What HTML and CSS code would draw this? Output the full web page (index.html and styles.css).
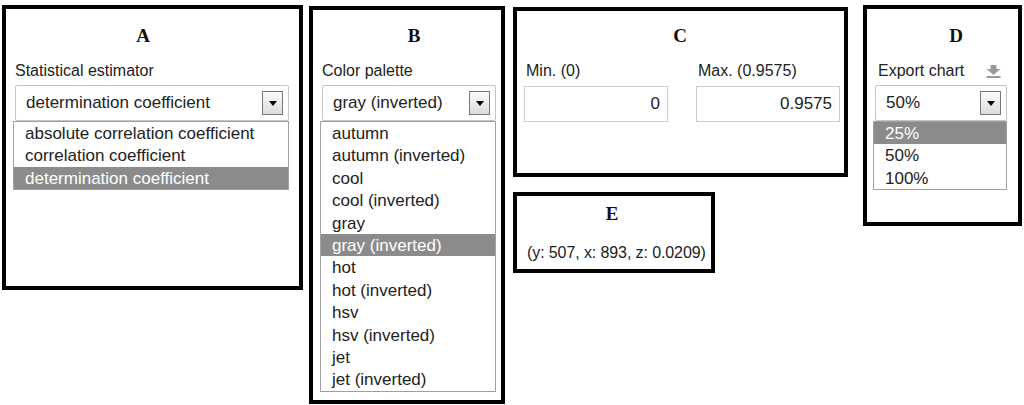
FILE: index.html
```html
<!DOCTYPE html>
<html lang="en">
<head>
    <meta charset="UTF-8">
    <meta name="viewport" content="width=device-width, initial-scale=1.0">
    <title>Chart Controls</title>
    <link rel="stylesheet" href="styles.css">
</head>
<body>
    <div class="panels">
        <div class="panel panel-a">
            <div class="title">A</div>
            <div class="field">
                <div class="field-label">Statistical estimator</div>
                <div class="select"><span>determination coefficient</span><span class="select-btn"></span></div>
                <ul class="options">
                    <li>absolute correlation coefficient</li>
                    <li>correlation coefficient</li>
                    <li class="selected">determination coefficient</li>
                </ul>
            </div>
        </div>

        <div class="panel panel-b">
            <div class="title">B</div>
            <div class="field">
                <div class="field-label">Color palette</div>
                <div class="select"><span>gray (inverted)</span><span class="select-btn"></span></div>
                <ul class="options">
                    <li>autumn</li>
                    <li>autumn (inverted)</li>
                    <li>cool</li>
                    <li>cool (inverted)</li>
                    <li>gray</li>
                    <li class="selected">gray (inverted)</li>
                    <li>hot</li>
                    <li>hot (inverted)</li>
                    <li>hsv</li>
                    <li>hsv (inverted)</li>
                    <li>jet</li>
                    <li>jet (inverted)</li>
                </ul>
            </div>
        </div>

        <div class="stack">
            <div class="panel panel-c">
                <div class="title">C</div>
                <div class="range">
                    <div class="range-field">
                        <div class="field-label">Min. (0)</div>
                        <input class="num-input" type="text" value="0" readonly>
                    </div>
                    <div class="range-field">
                        <div class="field-label">Max. (0.9575)</div>
                        <input class="num-input" type="text" value="0.9575" readonly>
                    </div>
                </div>
            </div>

            <div class="panel panel-e">
                <div class="title">E</div>
                <div class="coords">(y: 507, x: 893, z: 0.0209)</div>
            </div>
        </div>

        <div class="panel panel-d">
            <div class="title">D</div>
            <div class="field">
                <div class="field-label label-row">
                    <span>Export chart</span>
                    <svg class="download" width="17" height="13" viewBox="0 0 17 13">
                        <rect x="5.5" y="0" width="6" height="4" fill="#9a9a9a"/>
                        <polygon points="1.5,4 15.5,4 8.5,10" fill="#9a9a9a"/>
                        <rect x="1.5" y="11" width="14" height="2" fill="#9a9a9a"/>
                    </svg>
                </div>
                <div class="select"><span>50%</span><span class="select-btn"></span></div>
                <ul class="options">
                    <li class="selected">25%</li>
                    <li>50%</li>
                    <li>100%</li>
                </ul>
            </div>
        </div>
    </div>
</body>
</html>
```

FILE: styles.css
```css
body {
    margin: 0;
    font-family: 'Liberation Sans', Arial, sans-serif;
    color: #222;
    background-color: #fff;
}

.panels {
    display: flex;
    align-items: flex-start;
    padding: 5px 0 0 2px;
}

.panel {
    border: 4px solid #000;
    box-sizing: border-box;
    background-color: #fff;
}

.title {
    font-family: 'Liberation Serif', 'Times New Roman', serif;
    font-weight: bold;
    font-size: 19px;
    line-height: 22px;
    color: #111;
    text-align: center;
}

.field-label {
    margin-top: 15px;
    font-size: 16px;
    line-height: 18px;
    color: #222;
}

/* panel A */
.panel-a {
    width: 301px;
    height: 285px;
    padding: 16px 0 0 9px;
}

.panel-a .title {
    padding-right: 28px;
}

.panel-a .field {
    width: 274px;
}

/* panel B */
.panel-b {
    margin-left: 6px;
    margin-top: 1px;
    width: 196px;
    height: 398px;
    padding: 15px 0 0 9px;
}

.panel-b .title {
    padding-left: 5px;
}

.panel-b .field {
    width: 174px;
}

/* C and E column */
.stack {
    display: flex;
    flex-direction: column;
    margin-left: 8px;
}

.panel-c {
    margin-top: 2px;
    width: 335px;
    height: 170px;
    padding: 14px 0 0 7px;
}

.panel-c .title {
    padding-right: 8px;
}

.panel-e {
    margin-top: 15px;
    width: 202px;
    height: 81px;
    padding: 7px 0 0 10px;
}

.panel-e .title {
    padding-right: 14px;
}

.coords {
    margin-top: 19px;
    font-size: 16px;
    line-height: 18px;
    color: #222;
    letter-spacing: -0.1px;
}

/* panel D */
.panel-d {
    margin-left: 15px;
    width: 159px;
    height: 221px;
    padding: 16px 0 0 8px;
}

.panel-d .title {
    padding-left: 19px;
}

.panel-d .field {
    width: 132px;
}

.label-row {
    display: flex;
    justify-content: space-between;
    align-items: center;
    padding-left: 3px;
    padding-right: 5px;
}

/* select boxes */
.select {
    margin-top: 5px;
    height: 36px;
    box-sizing: border-box;
    border: 1px solid #c4c4c4;
    border-radius: 2px;
    display: flex;
    align-items: center;
    justify-content: space-between;
    padding: 0 5px 0 10px;
    font-size: 17px;
}

.select-btn {
    width: 21px;
    height: 24px;
    box-sizing: border-box;
    border: 1px solid #777;
    background: linear-gradient(#fbfbfb, #dcdcdc);
    display: flex;
    align-items: center;
    justify-content: center;
}

.select-btn::after {
    content: '';
    border-top: 5px solid #000;
    border-left: 4px solid transparent;
    border-right: 4px solid transparent;
}

.options {
    list-style: none;
    margin: 0 0 0 -2px;
    padding: 0;
    border: 1px solid #a0a0a0;
    font-size: 17px;
    line-height: 22.4px;
}

.options li {
    padding: 1px 0 0 11px;
    height: 21.4px;
    white-space: nowrap;
}

.options li.selected {
    background-color: #8b8b8b;
    color: #fff;
}

/* range inputs */
.range {
    display: flex;
    gap: 28px;
}

.range-field {
    width: 144px;
}

.range-field .field-label {
    padding-left: 2px;
}

.num-input {
    display: block;
    margin-top: 6px;
    width: 144px;
    height: 36px;
    box-sizing: border-box;
    border: 1px solid #ccc;
    padding: 0 7px 0 0;
    text-align: right;
    font-family: 'Liberation Sans', Arial, sans-serif;
    font-size: 17px;
    color: #222;
    outline: none;
}
```
